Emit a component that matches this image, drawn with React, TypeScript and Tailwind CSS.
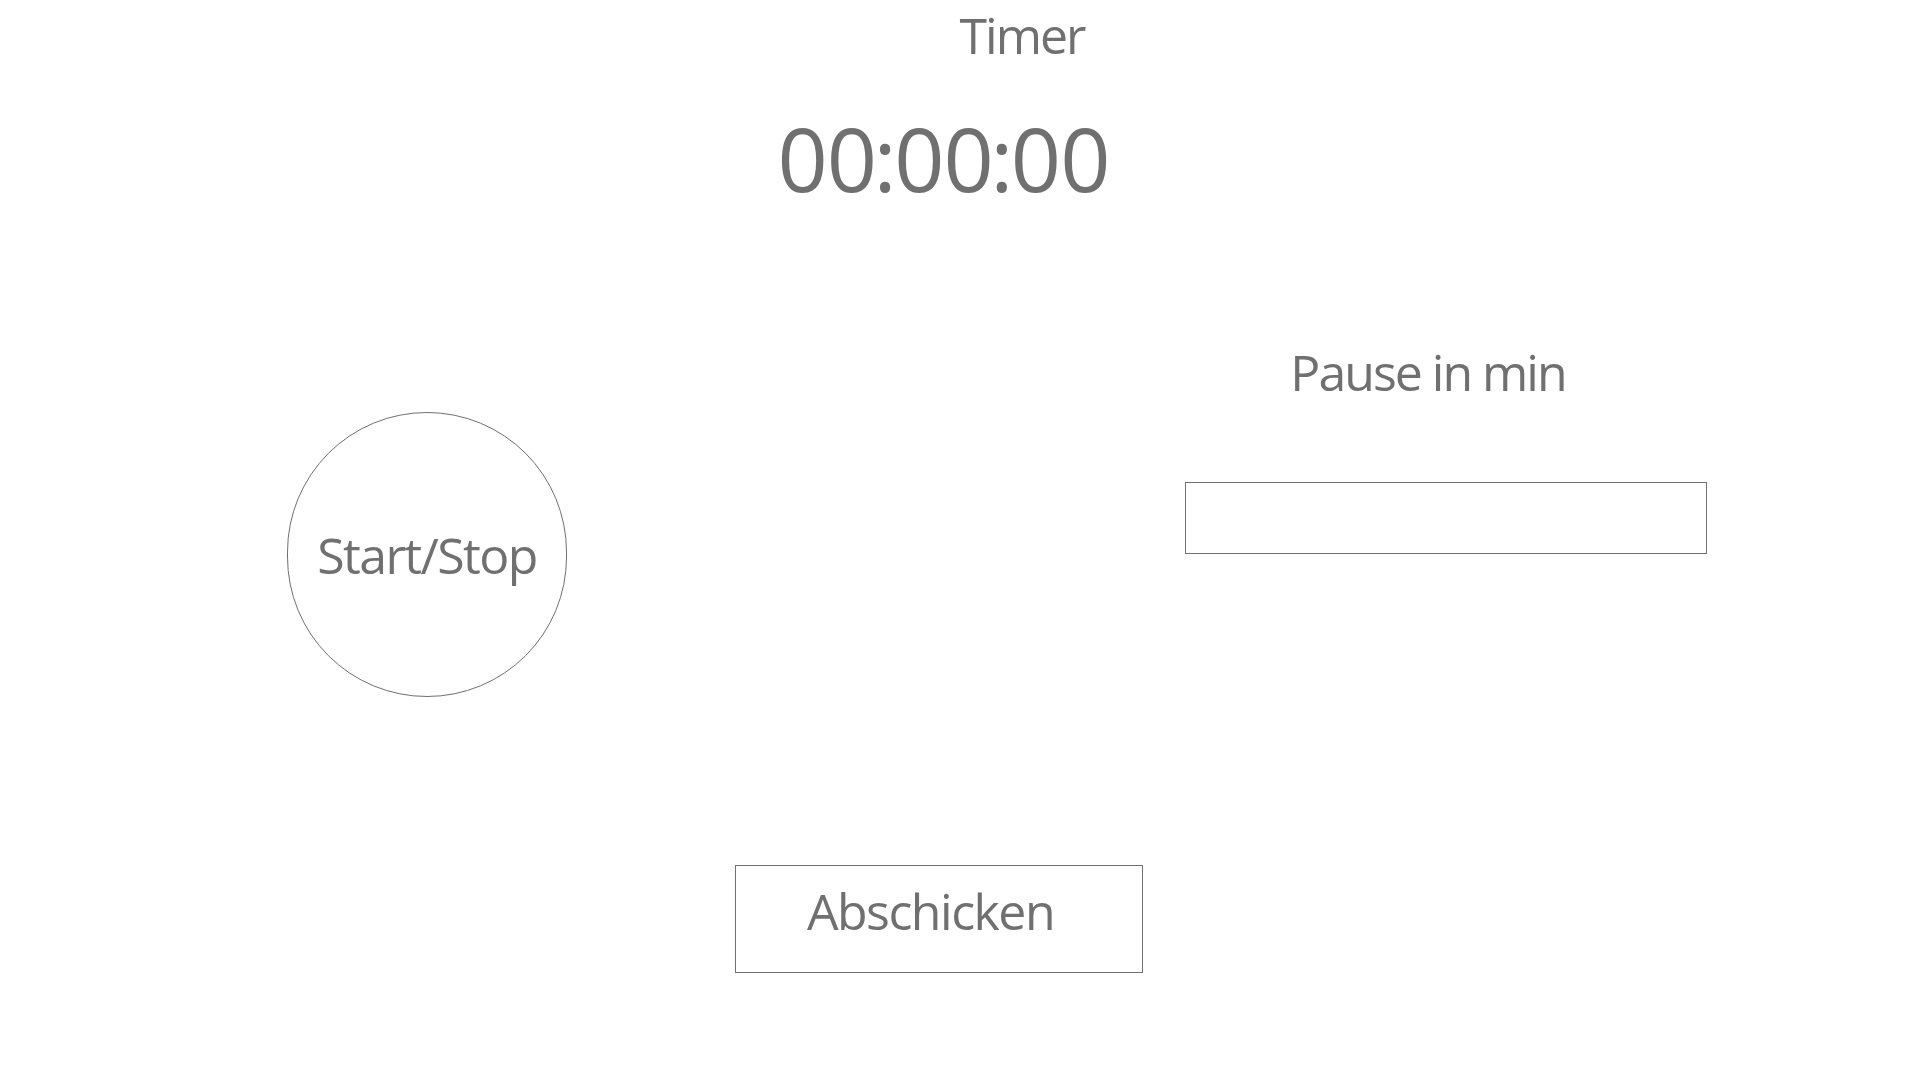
import React from "react";

export default function App() {
  return (
    <div
      className="w-full h-[1080px] bg-white text-[#707070] overflow-hidden"
      style={{ fontFamily: '"Open Sans", "Noto Sans", sans-serif' }}
    >
      <div className="flex justify-center pl-[124px] pt-[10px]">
        <div className="text-[50px] leading-none tracking-[-2px] h-[50px]">Timer</div>
      </div>
      <div className="flex justify-center pr-[33px] mt-[54px]">
        <div className="text-[88px] leading-none h-[88px] flex">
          <span className="tracking-[-1px]">00</span>
          <span className="inline-flex w-[18px] justify-center">:</span>
          <span className="tracking-[-1px]">00</span>
          <span className="inline-flex w-[18px] justify-center">:</span>
          <span className="tracking-[-1px]">00</span>
        </div>
      </div>
      <div className="flex items-start">
        <button
          type="button"
          className="ml-[287px] mt-[210px] w-[280px] h-[285px] rounded-full border border-[#707070] flex items-center justify-center bg-white text-[#707070]"
        >
          <span className="text-[50px] leading-none tracking-[-1.6px]">Start/Stop</span>
        </button>
        <div className="ml-[618px] w-[522px] flex flex-col">
          <div className="mt-[145px] pr-[36px] text-center text-[50px] leading-none tracking-[-2px] h-[50px]">
            Pause in min
          </div>
          <input
            type="text"
            className="mt-[85px] w-[522px] h-[72px] border border-[#707070] outline-none bg-white"
          />
        </div>
      </div>
      <button
        type="button"
        className="ml-[735px] mt-[168px] w-[408px] h-[108px] border border-[#707070] flex items-start justify-center pt-[20px] pr-[17px] bg-white text-[#707070]"
      >
        <span className="text-[50px] leading-none tracking-[-1.5px]">Abschicken</span>
      </button>
    </div>
  );
}
